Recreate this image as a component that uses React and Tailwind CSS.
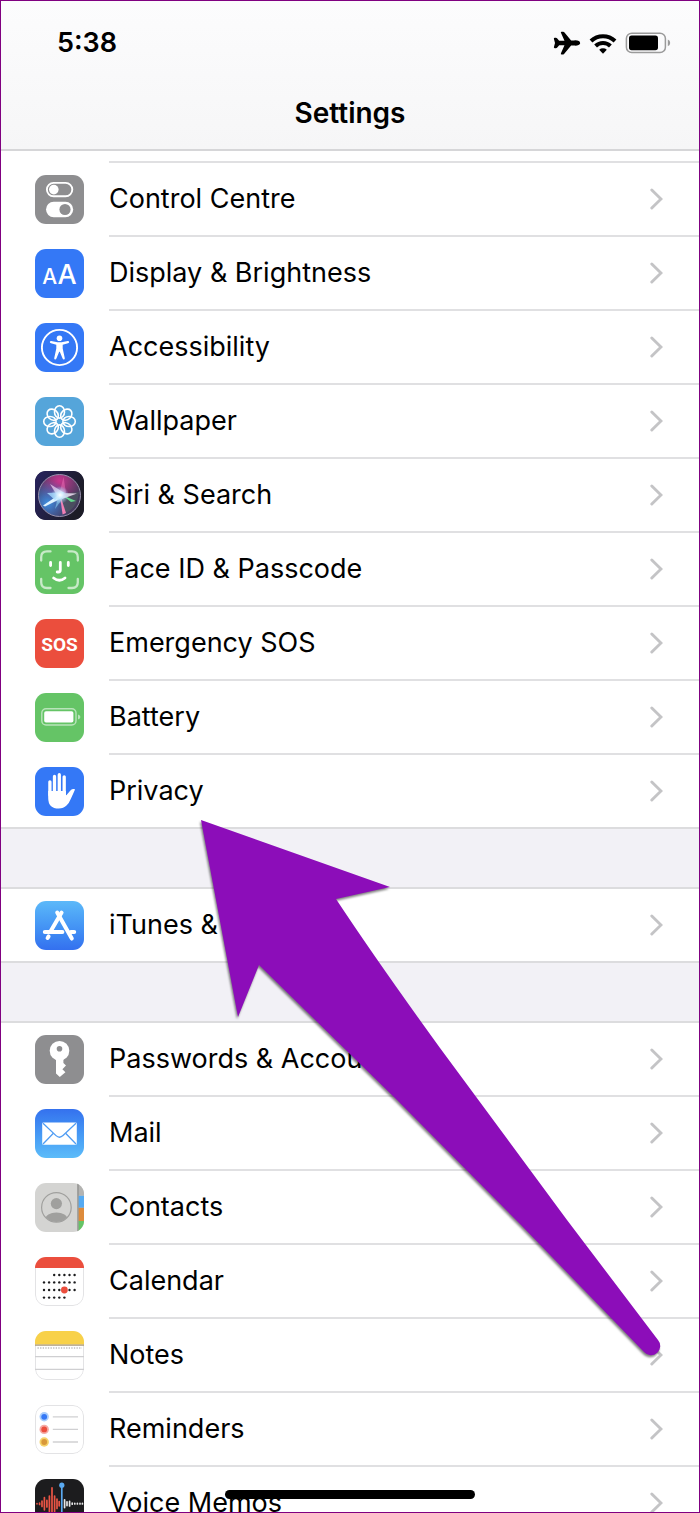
import React from "react";
import { IoAirplane } from "react-icons/io5";

function Tile({ className = "", children }) {
  return (
    <svg
      viewBox="0 0 49 49"
      aria-hidden="true"
      className={`size-[49px] shrink-0 rounded-[11px] ${className}`}
    >
      {children}
    </svg>
  );
}

function ControlCentreIcon() {
  return (
    <Tile className="bg-[#8e8e90]">
      <rect x="11.9" y="7.9" width="25.4" height="13.4" rx="6.7" fill="none" stroke="#fff" strokeWidth="1.9" />
      <circle cx="18.8" cy="14.6" r="4.8" fill="#fff" />
      <rect x="11" y="26.8" width="27.2" height="15.4" rx="7.7" fill="#fff" />
      <circle cx="30" cy="34.5" r="5.6" fill="#8e8e90" />
    </Tile>
  );
}

function DisplayIcon() {
  return (
    <Tile className="bg-[#3478f6]">
      <g fill="#fff" fontFamily="Inter, sans-serif" fontWeight="500" textAnchor="middle">
        <text x="14.6" y="34.6" fontSize="21">A</text>
        <text x="32" y="34.6" fontSize="27">A</text>
      </g>
    </Tile>
  );
}

function AccessibilityIcon() {
  return (
    <Tile className="bg-[#3478f6]">
      <circle cx="24.5" cy="24.5" r="17.6" fill="none" stroke="#fff" strokeWidth="1.9" />
      <circle cx="24.5" cy="15.2" r="2.8" fill="#fff" />
      <path
        d="M16.2 18 L22.5 19.2 H26.5 L32.8 18 Q34.2 18 34.2 19.1 Q34.2 19.9 33 20.3 L27.7 21.7 V25.5 L29.8 35.3 Q29.8 36.5 28.8 36.5 Q28 36.5 27.6 35.6 L24.8 28.8 H24.2 L21.4 35.6 Q21 36.5 20.2 36.5 Q19.2 36.5 19.2 35.3 L21.3 25.5 V21.7 L16 20.3 Q14.8 19.9 14.8 19.1 Q14.8 18 16.2 18 Z"
        fill="#fff"
      />
    </Tile>
  );
}

function WallpaperIcon() {
  return (
    <Tile className="bg-[#55a5da]">
      <g fill="none" stroke="#fff" strokeWidth="1.6" transform="translate(24.5 24.5)">
        {[0, 45, 90, 135, 180, 225, 270, 315].map((a) => (
          <ellipse key={a} cx="0" cy="-9.6" rx="5" ry="6.2" transform={`rotate(${a})`} />
        ))}
      </g>
    </Tile>
  );
}

function SiriIcon() {
  return (
    <Tile className="bg-[#231f45]">
      <defs>
        <linearGradient id="siri-bg" x1="0" y1="0" x2="1" y2="0.4">
          <stop offset="0" stopColor="#28235e" />
          <stop offset="1" stopColor="#1c1c26" />
        </linearGradient>
        <radialGradient id="siri-pink" cx="0.5" cy="0.15" r="0.55">
          <stop offset="0" stopColor="#c8358f" />
          <stop offset="1" stopColor="#c8358f" stopOpacity="0" />
        </radialGradient>
        <radialGradient id="siri-blue" cx="0.22" cy="0.68" r="0.55">
          <stop offset="0" stopColor="#3f8fe0" />
          <stop offset="1" stopColor="#3f6fd0" stopOpacity="0" />
        </radialGradient>
        <radialGradient id="siri-glow" cx="0.5" cy="0.5" r="0.5">
          <stop offset="0" stopColor="#fff" />
          <stop offset="0.35" stopColor="#d8f0ff" stopOpacity="0.8" />
          <stop offset="1" stopColor="#9fd8ff" stopOpacity="0" />
        </radialGradient>
      </defs>
      <rect width="49" height="49" rx="11" fill="url(#siri-bg)" />
      <circle cx="24.5" cy="24.5" r="21" fill="#443b5c" />
      <circle cx="24.5" cy="24.5" r="21" fill="url(#siri-pink)" />
      <circle cx="24.5" cy="24.5" r="21" fill="url(#siri-blue)" />
      <path d="M24 23 L44 21 Q42 38 30 42 Z" fill="#4c5560" opacity="0.75" />
      <path d="M24 24 L28.5 6 L31 22 Z" fill="#f06fb8" opacity="0.5" />
      <path d="M24.5 22 L31 42 L27.6 43.5 Z" fill="#f07fb4" />
      <path d="M27 24 L41 30 L36 31 Z" fill="#62d98c" />
      <path d="M25 22 L42 22.5 L27 28 Z" fill="#f0e0f4" opacity="0.85" />
      <path d="M15 13 L28 21 L23 26 Z" fill="#ecd0f2" opacity="0.75" />
      <path d="M28 21 L8 34.4 L10 35.6 L27 27 Z" fill="#dff3ff" />
      <path d="M12 22 L30 21 L20 29 Z" fill="#a6dcff" opacity="0.8" />
      <path d="M24 22 L20 38 L28 27 Z" fill="#8ad0f4" opacity="0.6" />
      <circle cx="25" cy="24" r="9" fill="url(#siri-glow)" />
      <circle cx="24.5" cy="24.5" r="21" fill="none" stroke="#9892ad" strokeWidth="1" />
    </Tile>
  );
}

function FaceIdIcon() {
  return (
    <Tile className="bg-[#65c466]">
      <g fill="none" strokeLinecap="round" strokeLinejoin="round">
        <path
          d="M6.2 15.5 V12.2 Q6.2 6.4 12 6.4 H15.5 M33.5 6.4 H37 Q42.8 6.4 42.8 12.2 V15.5 M42.8 34 V37.2 Q42.8 43 37 43 H33.5 M15.5 43 H12 Q6.2 43 6.2 37.2 V34"
          stroke="#c8eac8"
          strokeWidth="2.3"
        />
        <path
          d="M15.6 17.4 V20.6 M33.3 17.4 V20.6 M25.3 17.4 V25 Q25.3 27 23.4 27 H22.2 M18.6 33 Q24.4 37.6 30 33"
          stroke="#fff"
          strokeWidth="2.8"
        />
      </g>
    </Tile>
  );
}

function SosIcon() {
  return (
    <Tile className="bg-[#eb4e3d]">
      <text
        x="24.5"
        y="31.5"
        fill="#fff"
        fontFamily="Roboto, sans-serif"
        fontWeight="700"
        fontSize="19"
        textAnchor="middle"
      >
        SOS
      </text>
    </Tile>
  );
}

function BatteryIcon() {
  return (
    <Tile className="bg-[#65c466]">
      <rect x="6.8" y="15.8" width="34.2" height="16.2" rx="4.2" fill="none" stroke="#b9e4ba" strokeWidth="1.4" />
      <rect x="9.2" y="18.3" width="29.2" height="11.2" rx="1.8" fill="#fff" />
      <path d="M43 21.5 Q45.4 22.4 45.4 24 Q45.4 25.6 43 26.5 Z" fill="#b9e4ba" />
    </Tile>
  );
}

function PrivacyIcon() {
  return (
    <Tile className="bg-[#3478f6]">
      <g stroke="#fff" strokeWidth="3.3" strokeLinecap="round" fill="none">
        <path d="M14.9 14.8 V28 M19.5 9.4 V26 M24.3 7.7 V26 M29.2 9.8 V26" />
      </g>
      <path
        d="M13.2 24 H31 V28.2 Q31.6 28.2 32.4 27 L35.4 23.4 Q37 21.7 39.4 22 Q40.4 22.4 39.6 23.6 L36 31.5 Q34.2 36 31.5 38.6 Q28.5 41.6 23.8 41.6 Q13.2 41.6 13.2 31 Z"
        fill="#fff"
      />
    </Tile>
  );
}

function AppStoreIcon() {
  return (
    <Tile className="bg-gradient-to-b from-[#5cb9f9] to-[#3470ef]">
      <g fill="none" stroke="#fff" strokeWidth="4" strokeLinecap="round">
        <path d="M26.6 11.6 L15.8 30 M13.6 35.4 L12.6 37 M9.8 31 H27.4 M35.8 31 H39.2" />
        <path d="M22.2 11.6 L36.8 37.6" />
      </g>
    </Tile>
  );
}

function KeyIcon() {
  return (
    <Tile className="bg-[#8e8e90]">
      <circle cx="24.5" cy="15.8" r="9.8" fill="#fff" />
      <path d="M21 23 V38.4 L24.8 42 L30.4 37.2 L27.4 34.2 L31 30.6 L28.4 28 V23 Z" fill="#fff" />
      <circle cx="24.5" cy="13.8" r="2.8" fill="#8e8e90" />
    </Tile>
  );
}

function MailIcon() {
  return (
    <Tile className="bg-gradient-to-b from-[#3571ee] to-[#5cbcf9]">
      <rect x="7.2" y="13.4" width="34.6" height="22.4" rx="1.4" fill="#fff" />
      <g fill="none" stroke="#4f9cf3" strokeWidth="1.3">
        <path d="M8 14.2 L21 26.6 Q24.5 29.8 28 26.6 L41 14.2" />
        <path d="M8 35 L18.4 24.3 M41 35 L30.6 24.3" />
      </g>
    </Tile>
  );
}

function ContactsIcon() {
  return (
    <Tile className="overflow-hidden bg-[#d4d4d2]">
      <defs>
        <clipPath id="contact-ring">
          <circle cx="21.4" cy="24.4" r="14.6" />
        </clipPath>
      </defs>
      <rect x="42.8" width="6.2" height="12.8" fill="#b3b3b1" />
      <rect x="43.4" y="12.8" width="5.6" height="12" fill="#55aaf2" />
      <rect x="43.4" y="24.8" width="5.6" height="13.2" fill="#dd8b3c" />
      <rect x="43.4" y="38" width="5.6" height="11" fill="#65c466" />
      <rect x="42.4" width="1.1" height="49" fill="#858583" />
      <circle cx="21.4" cy="24.4" r="14.8" fill="none" stroke="#a0a09e" strokeWidth="1.2" />
      <g fill="#a0a09e" clipPath="url(#contact-ring)">
        <circle cx="21.4" cy="20.6" r="5.6" />
        <ellipse cx="21.4" cy="36.8" rx="11.4" ry="7.4" />
      </g>
    </Tile>
  );
}

const CALENDAR_COLUMNS = [9, 14.1, 19.2, 24.3, 29.4, 34.5, 39.6];
const CALENDAR_ROWS = [
  { y: 18, from: 2, to: 7 },
  { y: 25.4, from: 0, to: 7 },
  { y: 33, from: 0, to: 7 },
  { y: 40.6, from: 0, to: 5 },
];

function CalendarIcon() {
  return (
    <Tile className="overflow-hidden bg-white">
      <rect x="0.5" y="0.5" width="48" height="48" rx="10.5" fill="none" stroke="#e3e3e5" />
      <path d="M0 11 V0 H49 V11 Z" fill="#eb4e3d" />
      {CALENDAR_ROWS.map((row) =>
        CALENDAR_COLUMNS.slice(row.from, row.to).map((x) => (
          <circle key={`${x}-${row.y}`} cx={x} cy={row.y} r="1.2" fill="#1c1c1e" />
        ))
      )}
      <circle cx="29.4" cy="33" r="3.4" fill="#eb4e3d" />
    </Tile>
  );
}

function NotesIcon() {
  return (
    <Tile className="overflow-hidden bg-white">
      <rect x="0.5" y="0.5" width="48" height="48" rx="10.5" fill="none" stroke="#e3e3e5" />
      <rect width="49" height="13.6" fill="#f8d149" />
      <path d="M0 14.2 H49" stroke="#a8987a" strokeWidth="1.2" />
      <path d="M2.5 17 H47" stroke="#bdbdbf" strokeWidth="1.4" strokeDasharray="1.3 1.3" />
      <path d="M0 25.7 H49 M0 38.3 H49" stroke="#cfcfd1" strokeWidth="1.2" />
    </Tile>
  );
}

const REMINDER_ROWS = [
  { y: 11.8, ring: "#a9cdfb", dot: "#3478f6" },
  { y: 24.4, ring: "#f5aaa4", dot: "#eb4e3d" },
  { y: 37, ring: "#f6d36a", dot: "#d9983a" },
];

function RemindersIcon() {
  return (
    <Tile className="bg-white">
      <rect x="0.5" y="0.5" width="48" height="48" rx="10.5" fill="none" stroke="#e3e3e5" />
      {REMINDER_ROWS.map((row) => (
        <g key={row.y}>
          <circle cx="9.2" cy={row.y} r="4.7" fill={row.ring} />
          <circle cx="9.2" cy={row.y} r="2.9" fill={row.dot} />
          <path d={`M17.8 ${row.y} H43`} stroke="#d0d0d2" strokeWidth="1.3" />
        </g>
      ))}
    </Tile>
  );
}

function VoiceMemosIcon() {
  return (
    <Tile className="bg-[#1c1c1e]">
      <g fill="none" strokeWidth="1.7" strokeLinecap="round">
        <path
          d="M2 24.6 V24.8 M4.6 24 V25.4 M7 22 V27.4 M9.4 18.6 V30.8 M11.9 21.4 V28 M14.4 17 V32.4 M17 8.8 V40.6 M19.6 17 V32.4 M22 20 V29.4 M24.2 22.6 V26.8"
          stroke="#eb5545"
        />
        <path
          d="M29.6 20.8 V28.6 M32 22.8 V26.6 M34.6 22.4 V27 M37.2 24.2 V25.2 M39.8 24.4 V25 M42.4 24.4 V25 M45 24.4 V25 M47.4 24.4 V25"
          stroke="#e6e6e8"
        />
        <path d="M26.8 6 V43" stroke="#5aa9f0" />
      </g>
      <circle cx="26.8" cy="6.2" r="2.6" fill="#5aa9f0" />
    </Tile>
  );
}

const GROUPS = [
  [
    ["Control Centre", ControlCentreIcon],
    ["Display & Brightness", DisplayIcon],
    ["Accessibility", AccessibilityIcon],
    ["Wallpaper", WallpaperIcon],
    ["Siri & Search", SiriIcon],
    ["Face ID & Passcode", FaceIdIcon],
    ["Emergency SOS", SosIcon],
    ["Battery", BatteryIcon],
    ["Privacy", PrivacyIcon],
  ],
  [["iTunes & App Store", AppStoreIcon]],
  [
    ["Passwords & Accounts", KeyIcon],
    ["Mail", MailIcon],
    ["Contacts", ContactsIcon],
    ["Calendar", CalendarIcon],
    ["Notes", NotesIcon],
    ["Reminders", RemindersIcon],
    ["Voice Memos", VoiceMemosIcon],
  ],
];

function Chevron() {
  return (
    <svg viewBox="0 0 13 22" aria-hidden="true" className="h-[22px] w-[13px] shrink-0">
      <path d="M1.8 2 L11 11 L1.8 20" fill="none" stroke="#c4c4c6" strokeWidth="2.9" strokeLinecap="round" />
    </svg>
  );
}

function Row({ label, Icon, last }) {
  return (
    <li className={last ? "border-b-2 border-[#dcdcde]" : ""}>
      <a href="#" className="flex items-stretch pl-[34px]">
        <span className="flex h-[72px] items-center">
          <Icon />
        </span>
        <span
          className={`ml-[25px] flex flex-1 items-center justify-between pr-9 ${
            last ? "" : "border-b-2 border-[#e0e0e2]"
          }`}
        >
          <span className="leading-[72px] whitespace-nowrap">{label}</span>
          <Chevron />
        </span>
      </a>
    </li>
  );
}

function StatusIcons() {
  return (
    <div className="flex items-center gap-2">
      <IoAirplane aria-label="Airplane mode" className="size-7" />
      <svg viewBox="0 0 28 21" aria-label="Wi-Fi" className="h-[21px] w-7">
        <g fill="none" stroke="#000" strokeWidth="4">
          <path d="M2 8 A17.4 17.4 0 0 1 26 8" />
          <path d="M6.6 13 A10.6 10.6 0 0 1 21.4 13" />
        </g>
        <path d="M10.2 16.8 A5.6 5.6 0 0 1 17.8 16.8 L14 20.8 Z" />
      </svg>
      <svg viewBox="0 0 46 22" aria-label="Battery level" className="h-[22px] w-[46px]">
        <rect x="1.4" y="1.2" width="39" height="19.4" rx="5.4" fill="none" stroke="#9a9a9a" strokeWidth="1.5" />
        <rect x="4" y="3.6" width="29" height="14.6" rx="2.6" />
        <path d="M42.8 7.6 Q45.2 8.6 45.2 10.9 Q45.2 13.2 42.8 14.2 Z" fill="#9a9a9a" />
      </svg>
    </div>
  );
}

export default function App() {
  return (
    <div className="relative flex h-screen flex-col overflow-hidden border border-[#800080] bg-white font-['Inter','Liberation_Sans',sans-serif] text-black">
      <header className="shrink-0 border-b-2 border-[#d6d6d8] bg-gradient-to-b from-[#fcfcfd] to-[#f6f6f7]">
        <div className="flex h-[84px] items-center justify-between pr-7 pl-14">
          <time className="text-[27px] font-semibold">5:38</time>
          <StatusIcons />
        </div>
        <h1 className="h-16 text-center text-[28px] leading-[56px] font-semibold">Settings</h1>
      </header>

      <main className="flex min-h-0 flex-1 flex-col overflow-hidden text-[27px]">
        <div className="ml-[108px] h-3 shrink-0 border-b-2 border-[#e0e0e2]" />
        {GROUPS.map((rows, index) => (
          <React.Fragment key={index}>
            {index > 0 && <div className="h-[60px] shrink-0 border-b-2 border-[#dcdcde] bg-[#f2f1f6]" />}
            <ul className="shrink-0">
              {rows.map(([label, Icon], i) => (
                <Row key={label} label={label} Icon={Icon} last={index < 2 && i === rows.length - 1} />
              ))}
            </ul>
          </React.Fragment>
        ))}
      </main>

      <svg
        viewBox="0 0 470 550"
        aria-hidden="true"
        className="pointer-events-none absolute top-[814px] left-[194px] h-[550px] w-[470px] drop-shadow-[-1px_2px_1px_rgba(0,0,0,0.5)]"
      >
        <path
          d="M6 5 L195 72 L141 84 Q182 146 245 233 L372 405 L463 525 A9 9 0 0 1 449 537 L325 409 L202 285 Q160 244 64 150 L43 202 Z"
          fill="#8c0db9"
        />
      </svg>

      <div className="absolute bottom-[13px] left-1/2 h-[9px] w-[250px] -translate-x-1/2 rounded-full bg-black" />
    </div>
  );
}
